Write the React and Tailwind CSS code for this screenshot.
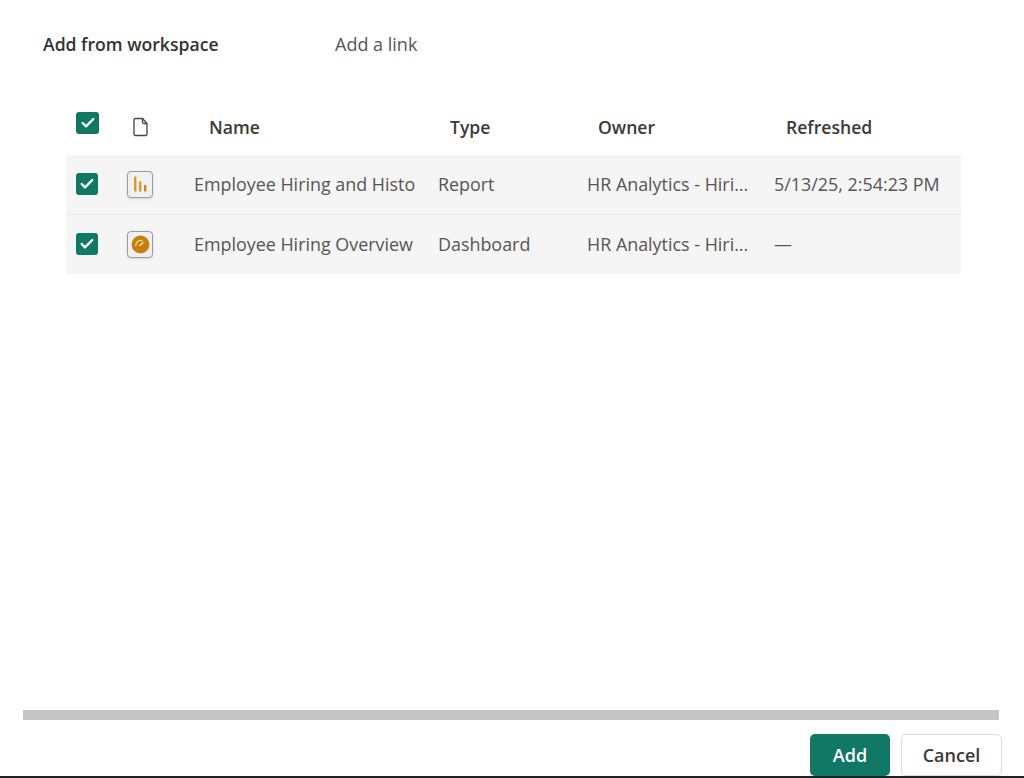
import { Check } from 'lucide-react';

const rows = [
  { name: 'Employee Hiring and Histo', type: 'Report', owner: 'HR Analytics - Hiri...', refreshed: '5/13/25, 2:54:23 PM', icon: 'report' },
  { name: 'Employee Hiring Overview', type: 'Dashboard', owner: 'HR Analytics - Hiri...', refreshed: '—', icon: 'dashboard' },
];

function Checkbox({ big }) {
  return (
    <div className={`flex items-center justify-center bg-[#117865] rounded-[3px] ${big ? 'w-[23px] h-[22px] mb-[8px]' : 'w-[22px] h-[22px]'}`}>
      <Check className="w-[16px] h-[16px] text-white" strokeWidth={3.5} />
    </div>
  );
}

function ItemIcon({ kind }) {
  return (
    <div className="w-[26px] h-[27px] rounded-[4px] border border-[#9a9a9a] bg-[#f0f0f0] shadow-sm flex items-center justify-center">
      {kind === 'report' ? (
        <svg width="18" height="18" viewBox="0 0 18 18">
          <rect x="3" y="1.5" width="2.4" height="15" fill="#d99a2b" />
          <rect x="8" y="6.5" width="2.4" height="10" fill="#d99a2b" />
          <rect x="13" y="10" width="2.4" height="6.5" fill="#c8891f" />
        </svg>
      ) : (
        <svg width="19" height="19" viewBox="0 0 18 18">
          <circle cx="9" cy="9" r="8.5" fill="#c77f0a" />
          <path d="M4.5 10.5a4.8 4.8 0 0 1 6.5-5" fill="none" stroke="#f0d9a8" strokeWidth="1.2" />
          <path d="M8 10.5l3.5-3.5" stroke="#f0d9a8" strokeWidth="1.4" />
        </svg>
      )}
    </div>
  );
}

export default function App() {
  return (
    <div className="w-[1024px] h-[778px] bg-white flex flex-col overflow-hidden font-['Open_Sans','Noto_Sans',sans-serif] text-[#424242] border-b-2 border-[#222]">
      <div className="flex pt-[32px] pl-[43px] h-[104px]">
        <div className="w-[292px] text-[17.6px] leading-[24px] font-semibold text-[#333]">Add from workspace</div>
        <div className="text-[18px] leading-[24px] text-[#555]">Add a link</div>
      </div>

      <div className="flex items-center h-[46px] mb-[5px] pl-[76px] text-[17.6px] font-semibold text-[#3a3a3a]">
        <div className="w-[57px]"><Checkbox big /></div>
        <div className="w-[76px]">
          <svg width="16" height="20" viewBox="0 0 16 20" fill="none" stroke="#444" strokeWidth="1.3">
            <path d="M2.5 1.5h7l4.5 5v10.5a1.5 1.5 0 0 1-1.5 1.5h-10a1.5 1.5 0 0 1-1.5-1.5v-14a1.5 1.5 0 0 1 1.5-1.5z" />
            <path d="M9.5 1.5v3.5a1.5 1.5 0 0 0 1.5 1.5h3" />
          </svg>
        </div>
        <div className="w-[241px]">Name</div>
        <div className="w-[148px]">Type</div>
        <div className="w-[188px]">Owner</div>
        <div>Refreshed</div>
      </div>

      <div className="ml-[66px] w-[895px] bg-[#f5f5f5] rounded-[2px] divide-y divide-[#e9e9e9]">
        {rows.map((row) => (
          <div key={row.name} className="flex items-center h-[59.5px] pl-[10px] text-[17.9px] text-[#555]">
            <div className="w-[51px]"><Checkbox /></div>
            <div className="w-[67px]"><ItemIcon kind={row.icon} /></div>
            <div className="w-[244px] whitespace-nowrap">{row.name}</div>
            <div className="w-[149px]">{row.type}</div>
            <div className="w-[187px] whitespace-nowrap">{row.owner}</div>
            <div className="whitespace-nowrap">{row.refreshed}</div>
          </div>
        ))}
      </div>

      <div className="flex-1" />

      <div className="ml-[23px] w-[976px] h-[10px] bg-[#c6c5c5]" />

      <div className="flex justify-end gap-[11px] pr-[22px] pt-[14px]">
        <button className="w-[80px] h-[42px] bg-[#117865] rounded-[5px] text-white text-[18px] font-semibold">Add</button>
        <button className="w-[101px] h-[42px] bg-white border border-[#dcdcdc] rounded-[5px] text-[18px] font-semibold text-[#3a3a3a]">Cancel</button>
      </div>
    </div>
  );
}
